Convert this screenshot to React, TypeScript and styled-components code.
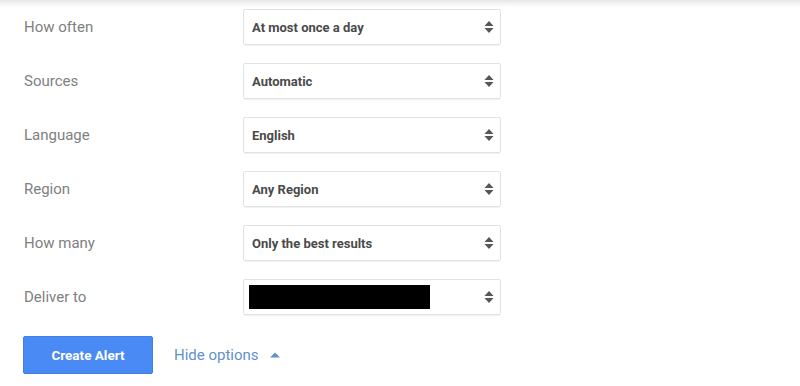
import { createGlobalStyle } from "styled-components";
import styled from "styled-components";

const GlobalStyle = createGlobalStyle`
  body {
    margin: 0;
    background: #fff;
    font-family: Roboto, "Liberation Sans", Arial, sans-serif;
  }
`;

const Page = styled.div`
  width: 800px;
  height: 386px;
  background: linear-gradient(to bottom, #e6e6e6 0px, #f6f6f6 4px, #ffffff 8px);
  padding: 9px 0 0 24px;
  box-sizing: border-box;
`;

const Form = styled.div`
  display: flex;
  flex-direction: column;
  gap: 18px;
`;

const Row = styled.div`
  display: grid;
  grid-template-columns: 219px 258px;
  align-items: center;
`;

const Label = styled.div`
  font-size: 15px;
  color: #808080;
`;

const Select = styled.div`
  height: 36px;
  box-sizing: border-box;
  border: 1px solid #e2e2e2;
  border-radius: 2px;
  box-shadow: 0 1px 1px rgba(0, 0, 0, 0.06);
  display: flex;
  align-items: center;
  justify-content: space-between;
  padding: 0 6px 0 8px;
  font-size: 13px;
  font-weight: 700;
  color: #4a4a4a;
`;

const Redacted = styled.div`
  width: 181px;
  height: 24px;
  background: #000;
  margin-left: -3px;
`;

const Actions = styled.div`
  display: flex;
  align-items: center;
  gap: 21px;
  margin-top: 21px;
  margin-left: -1px;
`;

const Button = styled.button`
  width: 130px;
  height: 38px;
  border: 1px solid #3f7fe8;
  border-radius: 2px;
  background: #4a8af4;
  color: #fff;
  font-family: inherit;
  font-size: 13.5px;
  font-weight: 700;
`;

const Toggle = styled.div`
  display: flex;
  align-items: center;
  gap: 11px;
  font-size: 15px;
  color: #6390cc;
`;

function Arrows() {
  return (
    <svg width="10" height="14" viewBox="0 0 10 14">
      <path d="M0.5 6L5 1L9.5 6Z" fill="#555" />
      <path d="M0.5 8L5 13L9.5 8Z" fill="#555" />
    </svg>
  );
}

const rows: { label: string; value: string | null }[] = [
  { label: "How often", value: "At most once a day" },
  { label: "Sources", value: "Automatic" },
  { label: "Language", value: "English" },
  { label: "Region", value: "Any Region" },
  { label: "How many", value: "Only the best results" },
  { label: "Deliver to", value: null },
];

export default function App() {
  return (
    <>
      <GlobalStyle />
      <Page>
        <Form>
          {rows.map((row) => (
            <Row key={row.label}>
              <Label>{row.label}</Label>
              <Select>
                {row.value ? <span>{row.value}</span> : <Redacted />}
                <Arrows />
              </Select>
            </Row>
          ))}
        </Form>
        <Actions>
          <Button>Create Alert</Button>
          <Toggle>
            Hide options
            <svg width="10" height="6" viewBox="0 0 10 6">
              <path d="M0 5.5L5 0.5L10 5.5Z" fill="#6390cc" />
            </svg>
          </Toggle>
        </Actions>
      </Page>
    </>
  );
}
